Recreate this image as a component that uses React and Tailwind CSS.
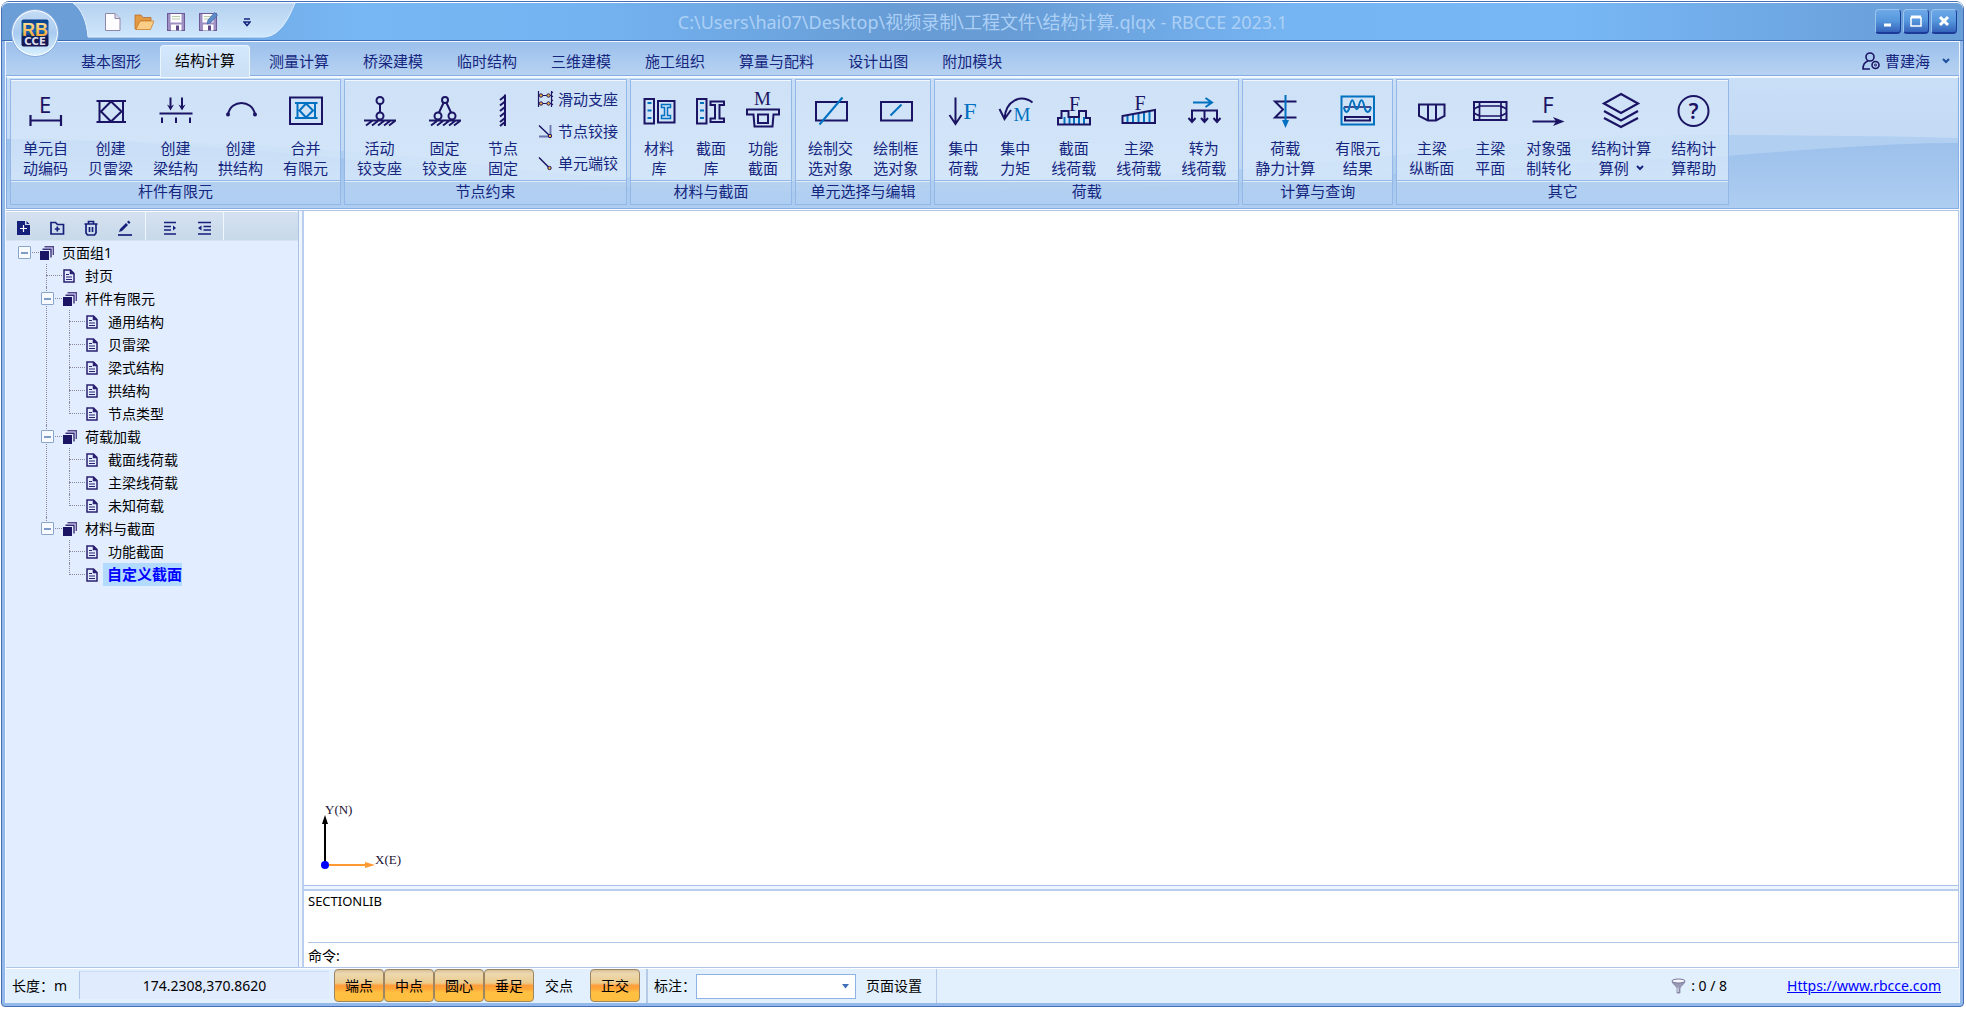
import React, { useState } from 'react';

const DARK = '#1b1464';
const BLUE = '#0070c0';

const Svg = ({ size = 36, children }) => (
  <svg
    width={size}
    height={size}
    viewBox={`0 0 ${size} ${size}`}
    fill="none"
    stroke={DARK}
    strokeWidth="2"
    className="shrink-0 overflow-visible"
    aria-hidden="true"
  >
    {children}
  </svg>
);

const Letter = ({ x, y, size, serif = false, color = DARK, weight = 400, children }) => (
  <text
    x={x}
    y={y}
    fontSize={size}
    fontWeight={weight}
    fontFamily={serif ? 'Liberation Serif, serif' : 'Noto Sans, sans-serif'}
    textAnchor="middle"
    fill={color}
    stroke="none"
  >
    {children}
  </text>
);

const Ground = () => (
  <path d="M2 28.5H34M10 29l-6 4.500M16 29l-6 4.500M22 29l-6 4.500M28 29l-6 4.500M33 29l-6 4.500" />
);

// large ribbon icons, all on a 36x36 grid
const icons = {
  number: (
    <Svg>
      <Letter x={17} y={21} size={22}>E</Letter>
      <path d="M2.500 28.500H33M2.500 23V34M33 23V34" strokeWidth="2.200" />
    </Svg>
  ),
  truss: (
    <Svg>
      <path d="M3.500 9H33M3.500 30H33M6.500 9V30M30 9V30M18 9.500L28.500 19.500L18 29.500L8 19.500Z" />
    </Svg>
  ),
  beam: (
    <Svg>
      <path d="M1.500 21.500H34.500M4 25.500V31M18 25.500V31M32 25.500V31M12.500 5.500V16M24 5.500V16" />
      <path d="M9 12.500L12.500 18.500L16 12.500L12.500 14.500ZM20.500 12.500L24 18.500L27.500 12.500L24 14.500Z" fill={DARK} stroke="none" />
    </Svg>
  ),
  arch: (
    <Svg>
      <path d="M5 22.500C8 7 29 7 32 22.500" />
      <circle cx="5" cy="22.500" r="2" fill={DARK} stroke="none" />
      <circle cx="32" cy="22.500" r="2" fill={DARK} stroke="none" />
    </Svg>
  ),
  merge: (
    <Svg>
      <rect x="2" y="5.500" width="32" height="26.500" />
      <path d="M7 11H29.500M7 26H29.500M9.500 11V26M27 11V26M18 11.500L25 18.500L18 25.500L11.500 18.500Z" stroke={BLUE} />
    </Svg>
  ),
  roller: (
    <Svg>
      <circle cx="18" cy="8.500" r="3.500" />
      <path d="M18 12V20.500" />
      <circle cx="18" cy="24" r="3.500" />
      <Ground />
    </Svg>
  ),
  pinned: (
    <Svg>
      <circle cx="18" cy="8" r="3" />
      <path d="M16.500 11L12 20.500M19.500 11L24 20.500" />
      <circle cx="11" cy="24" r="3.500" />
      <circle cx="25" cy="24" r="3.500" />
      <Ground />
    </Svg>
  ),
  fixed: (
    <Svg>
      <path d="M20 2.500V34" />
      <path d="M20 4L15 8M20 9.500L15 13.500M20 15L15 19M20 20.500L15 24.500M20 26L15 30M20 30L15 34" />
    </Svg>
  ),
  material: (
    <Svg>
      <rect x="3.500" y="7" width="9.500" height="24.500" />
      <path d="M6.500 11H10.500M6.500 18.500H10.500M6.500 26H10.500" stroke={BLUE} />
      <rect x="17" y="9" width="16.500" height="21.500" />
      <path d="M20.500 12.500H29.500V15.500H26.500V23.500H29.500V26.500H20.500V23.500H23.500V15.500H20.500Z" stroke={BLUE} strokeWidth="1.500" />
    </Svg>
  ),
  section: (
    <Svg>
      <rect x="4" y="7" width="9.500" height="24.500" />
      <path d="M7 11H11M7 18.500H11M7 26H11" stroke={BLUE} />
      <path d="M17.500 9.500H31V13H26.500V26.500H31V30H17.500V26.500H22V13H17.500Z" />
    </Svg>
  ),
  func: (
    <Svg>
      <Letter x={17.5} y={13} size={19} serif>M</Letter>
      <path d="M2 17.500H34V22.500H28.500L27.500 34.500H9.500L8.500 22.500H2Z" />
      <rect x="13" y="22.500" width="10" height="8.500" />
    </Svg>
  ),
  crossSel: (
    <Svg>
      <rect x="3" y="10" width="31" height="18.500" />
      <path d="M6.500 32.500L29.500 5.500" stroke={BLUE} />
    </Svg>
  ),
  boxSel: (
    <Svg>
      <rect x="3" y="10" width="31" height="18.500" />
      <path d="M12.500 23.500L23.500 12.500" stroke={BLUE} />
    </Svg>
  ),
  force: (
    <Svg>
      <path d="M10.500 5.500V31.500M4.500 23L10.500 32L16.500 23" />
      <Letter x={25} y={26.5} size={24} serif color={BLUE}>F</Letter>
    </Svg>
  ),
  moment: (
    <Svg>
      <path d="M35.500 10.500C24 2 9 8 7.500 26.500M2.500 17L7.500 27L14 18" />
      <Letter x={25} y={29} size={19} serif color={BLUE}>M</Letter>
    </Svg>
  ),
  sectionLoad: (
    <Svg>
      <path d="M8.500 25V32M13.500 25V32M18 25V32M23 25V32M28 25V32" stroke={BLUE} />
      <path d="M2 26H5.500V19H12.500V25H23V19H30V26H34V32.500H2Z" />
      <Letter x={18.5} y={18.5} size={20} serif>F</Letter>
    </Svg>
  ),
  beamLoad: (
    <Svg>
      <path d="M6.500 24V31M12 23V31M17.500 22V31M23 21V31M28.500 20V31" stroke={BLUE} />
      <path d="M1.500 24L34 18V31H1.500Z" />
      <Letter x={19} y={18} size={20} serif>F</Letter>
    </Svg>
  ),
  convertLoad: (
    <Svg>
      <path d="M7 10.500H25M19.500 6L26 10.500L19.500 15" stroke={BLUE} />
      <path d="M6 29.500V18.500H31V29.500M18.500 18.500V29.500M2.500 26L6 30L9.500 26M15 26L18.500 30L22 26M27.500 26L31 30L34.500 26" />
    </Svg>
  ),
  statics: (
    <Svg>
      <path d="M29.500 9.500H8L16 17.500L8 25.500H29.500" />
      <path d="M18.500 3V29" stroke={BLUE} />
      <path d="M15 28L18.500 36L22 28Z" fill={BLUE} stroke="none" />
    </Svg>
  ),
  result: (
    <Svg>
      <rect x="1.500" y="4.500" width="32.500" height="28" stroke={BLUE} />
      <path d="M4 15H31" strokeWidth="1.500" />
      <path d="M4 15C5 21.500 8 21.500 9.500 15C11.500 6 13 6 15 15C16 18 17.500 18 18.500 15C20.500 6 22.500 6 24.500 15C26 21.500 29.500 21.500 31 15" stroke={BLUE} />
      <rect x="5" y="25" width="25" height="3.500" />
    </Svg>
  ),
  profile: (
    <Svg>
      <path d="M5 12.500H30.500V24L22 28.500H14L5 24ZM14 12.500V28M22 12.500V28" />
    </Svg>
  ),
  plan: (
    <Svg>
      <rect x="2" y="10" width="32.500" height="18" />
      <path d="M7.500 14H29M7.500 24H29M7.500 10V28M29 10V28M2 17L7.500 14M2 21L7.500 24M34.500 17L29 14M34.500 21L29 24" strokeWidth="1.700" />
    </Svg>
  ),
  coerce: (
    <Svg>
      <Letter x={17} y={21} size={22}>F</Letter>
      <path d="M1.500 29.500H28" />
      <path d="M22 25L33.500 29.500L22 34L25 29.500Z" fill={DARK} stroke="none" />
    </Svg>
  ),
  layers: (
    <Svg>
      <path d="M18 2L35 11.500L18 21L1 11.500ZM1 19L18 28.500L35 19M1 26L18 35L35 26" strokeWidth="2.200" />
    </Svg>
  ),
  help: (
    <Svg>
      <circle cx="17.500" cy="19" r="15" />
      <Letter x={17.5} y={26.5} size={21} weight={600}>?</Letter>
    </Svg>
  ),
};

const smallIcons = {
  slide: (
    <Svg size={16}>
      <g strokeWidth="1">
        <path d="M1.500 0V16M14.500 0V16M2 4.500H14M2 12.500H14M14.500 2L16 1M14.500 6L16 5M14.500 10L16 9M14.500 14L16 13" strokeWidth="1.200" />
        <g fill="#f5b640">
          <circle cx="4" cy="4.500" r="1.700" />
          <circle cx="11.500" cy="4.500" r="1.700" />
          <circle cx="4" cy="12.500" r="1.700" />
          <circle cx="11.500" cy="12.500" r="1.700" />
        </g>
      </g>
    </Svg>
  ),
  joint: (
    <Svg size={16}>
      <path d="M2 13.500H12M13.500 2V12" stroke="#6a72b0" strokeWidth="1.800" />
      <path d="M2 2.500L12.500 12.500" strokeWidth="1.500" />
      <circle cx="13" cy="13" r="1.700" fill="#f5b640" strokeWidth="1" />
    </Svg>
  ),
  endHinge: (
    <Svg size={16}>
      <path d="M2 2.500L11.500 12" strokeWidth="1.500" />
      <circle cx="12.500" cy="13" r="1.700" fill="#f5b640" strokeWidth="1" />
    </Svg>
  ),
};

const tabs = [
  '基本图形', '结构计算', '测量计算', '桥梁建模', '临时结构',
  '三维建模', '施工组织', '算量与配料', '设计出图', '附加模块',
];

const ribbonGroups = [
  {
    title: '杆件有限元',
    items: [
      ['number', '单元自', '动编码'],
      ['truss', '创建', '贝雷梁'],
      ['beam', '创建', '梁结构'],
      ['arch', '创建', '拱结构'],
      ['merge', '合并', '有限元'],
    ],
  },
  {
    title: '节点约束',
    items: [
      ['roller', '活动', '铰支座'],
      ['pinned', '固定', '铰支座'],
      ['fixed', '节点', '固定'],
    ],
    small: [
      ['slide', '滑动支座'],
      ['joint', '节点铰接'],
      ['endHinge', '单元端铰'],
    ],
  },
  {
    title: '材料与截面',
    items: [
      ['material', '材料', '库'],
      ['section', '截面', '库'],
      ['func', '功能', '截面'],
    ],
  },
  {
    title: '单元选择与编辑',
    items: [
      ['crossSel', '绘制交', '选对象'],
      ['boxSel', '绘制框', '选对象'],
    ],
  },
  {
    title: '荷载',
    items: [
      ['force', '集中', '荷载'],
      ['moment', '集中', '力矩'],
      ['sectionLoad', '截面', '线荷载'],
      ['beamLoad', '主梁', '线荷载'],
      ['convertLoad', '转为', '线荷载'],
    ],
  },
  {
    title: '计算与查询',
    items: [
      ['statics', '荷载', '静力计算'],
      ['result', '有限元', '结果'],
    ],
  },
  {
    title: '其它',
    items: [
      ['profile', '主梁', '纵断面'],
      ['plan', '主梁', '平面'],
      ['coerce', '对象强', '制转化'],
      ['layers', '结构计算', '算例', true],
      ['help', '结构计', '算帮助'],
    ],
  },
];

const tree = {
  name: '页面组1',
  children: [
    { name: '封页' },
    {
      name: '杆件有限元',
      children: [
        { name: '通用结构' },
        { name: '贝雷梁' },
        { name: '梁式结构' },
        { name: '拱结构' },
        { name: '节点类型' },
      ],
    },
    {
      name: '荷载加载',
      children: [{ name: '截面线荷载' }, { name: '主梁线荷载' }, { name: '未知荷载' }],
    },
    {
      name: '材料与截面',
      children: [{ name: '功能截面' }, { name: '自定义截面' }],
    },
  ],
};

const Chevron = ({ color = '#15267f' }) => (
  <svg width="8" height="6" viewBox="0 0 8 6" fill="none" stroke={color} strokeWidth="2" aria-hidden="true">
    <path d="M1 1L4 4L7 1" />
  </svg>
);

const Logo = () => (
  <button
    type="button"
    aria-label="RBCCE"
    className="absolute left-[9px] top-[7px] z-10 flex h-12 w-12 items-center justify-center rounded-full border border-[#86addf] bg-gradient-to-b from-[#c5dcf5] via-[#a9cbf0] to-[#d9f1ff] ring-1 ring-inset ring-white"
  >
    <svg width="28" height="28" viewBox="0 0 28 28" aria-hidden="true">
      <defs>
        <linearGradient id="logoBack" x1="0" y1="0" x2="0" y2="1">
          <stop offset="0" stopColor="#0a3f87" />
          <stop offset="0.45" stopColor="#1766b4" />
          <stop offset="0.65" stopColor="#0c1c58" />
          <stop offset="1" stopColor="#1a1550" />
        </linearGradient>
        <linearGradient id="logoGold" x1="0" y1="0" x2="0" y2="1">
          <stop offset="0" stopColor="#ffe9a8" />
          <stop offset="1" stopColor="#f39a1c" />
        </linearGradient>
      </defs>
      <rect x="0.500" y="0.500" width="27" height="27" rx="2" fill="url(#logoBack)" />
      <text x="14" y="17" textAnchor="middle" fontSize="18" fontWeight="700" fontFamily="Liberation Sans, sans-serif" fill="url(#logoGold)">RB</text>
      <text x="14" y="26" textAnchor="middle" fontSize="10" fontWeight="700" fontFamily="DejaVu Sans, sans-serif" fill="#dcdcec">CCE</text>
    </svg>
  </button>
);

const Floppy = ({ pen = false }) => (
  <svg width="20" height="20" viewBox="0 0 20 20" aria-hidden="true">
    <rect x="1.500" y="1.500" width="17" height="17" fill="#a08fc2" stroke="#6b5a96" />
    <rect x="4.500" y="2" width="11" height="8.500" fill="#fdfdff" />
    <path d="M6 4.500H14M6 7H14" stroke="#b9c9a8" />
    <rect x="5" y="12.500" width="10.500" height="6" fill="#fff" />
    <rect x="10" y="13.500" width="3" height="5" fill="#5b4a86" />
    {pen && <path d="M9 12L10 8L16.500 0.500L19.500 3L13 10.500Z" fill="#5d8cc8" stroke="#3f6aa8" strokeWidth="0.700" />}
  </svg>
);

const QuickAccess = () => (
  <div className="relative ml-[70px] flex h-9 w-[226px] items-center pl-[30px] pt-1">
    <svg className="absolute inset-0 h-full w-full" viewBox="0 0 226 36" preserveAspectRatio="none" aria-hidden="true">
      <defs>
        <linearGradient id="quickBar" x1="0" y1="0" x2="0" y2="1">
          <stop offset="0" stopColor="#b5d1ef" />
          <stop offset="1" stopColor="#cfe7fc" />
        </linearGradient>
      </defs>
      <path d="M1 1C10 7 15 21 16 35H192C209 34 217 15 223 1Z" fill="url(#quickBar)" stroke="#e4f1ff" strokeWidth="1" />
    </svg>
    <div className="relative flex items-center gap-3">
      <button type="button" aria-label="新建">
        <svg width="20" height="20" viewBox="0 0 20 20" aria-hidden="true">
          <path d="M3.500 1.500H13L18 6.500V18.500H3.500Z" fill="#fdfdff" stroke="#8f86a8" />
          <path d="M13 1.500V6.500H18" fill="#dad6ea" stroke="#8f86a8" />
        </svg>
      </button>
      <button type="button" aria-label="打开">
        <svg width="20" height="20" viewBox="0 0 20 20" aria-hidden="true">
          <path d="M1 3H7L9 5.500H17V9H6L3 17H1Z" fill="#e39a45" stroke="#b9651b" strokeWidth="0.700" />
          <path d="M6 9H20L16.500 17.500H2Z" fill="#fbce88" stroke="#cf7d26" strokeWidth="0.800" />
        </svg>
      </button>
      <button type="button" aria-label="保存"><Floppy /></button>
      <button type="button" aria-label="另存为"><Floppy pen /></button>
      <button type="button" aria-label="自定义快速访问工具栏" className="ml-[13px]">
        <svg width="8" height="9" viewBox="0 0 8 9" fill="none" stroke="#15267f" strokeWidth="1.500" aria-hidden="true">
          <path d="M1 1H7M1 4H7L4 7.500Z" />
        </svg>
      </button>
    </div>
  </div>
);

const WindowButton = ({ label, children }) => (
  <button
    type="button"
    aria-label={label}
    className="flex h-[25px] w-[26px] items-center justify-center rounded-sm border border-b-2 border-[#9cc3ee] border-r-[#1c3f9c] border-b-[#1c3a98] bg-gradient-to-b from-[#6da9e8] via-[#5596dc] to-[#3763bb]"
  >
    <svg width="14" height="14" viewBox="0 0 14 14" fill="none" stroke="#fff" aria-hidden="true">{children}</svg>
  </button>
);

const TitleBar = () => (
  <header className="relative flex h-[39px] shrink-0 items-start rounded-t-md border-b border-[#3f6db5] bg-[linear-gradient(90deg,#6b9dd6_0%,#6b9dd6_5%,#77b7f4_18%,#74b3f1_30%,#679cd5_46%,#679cd5_51%,#76b5f3_66%,#77b7f5_80%,#699ed8_98%)] shadow-[inset_0_1px_0_#ffffff]">
    <Logo />
    <QuickAccess />
    <h1 className="pointer-events-none absolute inset-x-0 top-0 text-center text-lg/10 text-[#acd0f5]">
      C:\Users\hai07\Desktop\视频录制\工程文件\结构计算.qlqx - RBCCE 2023.1
    </h1>
    <div className="relative ml-auto flex gap-0.5 pr-1.5 pt-[7px]">
      <WindowButton label="最小化"><path d="M3 11H10" strokeWidth="3" /></WindowButton>
      <WindowButton label="最大化">
        <path d="M2 3H12" strokeWidth="3" />
        <path d="M2 3V12H12V3" strokeWidth="1.500" />
      </WindowButton>
      <WindowButton label="关闭"><path d="M3 3L11 11M11 3L3 11" strokeWidth="3" /></WindowButton>
    </div>
  </header>
);

const TabStrip = () => (
  <nav className="flex h-[35px] items-end border-b border-t border-b-[#86aee5] border-t-[#f1f7ff] bg-gradient-to-b from-[#9bc0ec] to-[#b7d2f1] pl-[60px]">
    <div className="flex items-end gap-1" role="tablist">
      {tabs.map((tab, i) => (
        <button
          key={tab}
          type="button"
          role="tab"
          aria-selected={i === 1}
          className={
            i === 1
              ? 'relative z-10 -mb-[2px] h-8 rounded-t-sm border border-b-0 border-[#e9f4ff] bg-gradient-to-b from-[#d3e8fc] to-[#cbdff5] px-[14px] pb-0.5 text-[15px] text-black'
              : 'h-7 px-[15px] text-[15px] text-[#15267f]'
          }
        >
          {tab}
        </button>
      ))}
    </div>
    <button type="button" className="mb-[3px] ml-auto flex items-center pr-[9px] text-[15px] text-[#15267f]">
      <svg width="18" height="18" viewBox="0 0 18 18" fill="none" stroke={DARK} strokeWidth="1.600" className="mr-[5px]" aria-hidden="true">
        <circle cx="8" cy="5" r="4" />
        <path d="M6 9C2.500 10 1 13 1 17H8" />
        <circle cx="13.500" cy="13" r="3.500" />
        <circle cx="13.500" cy="13" r="1" strokeWidth="1" />
      </svg>
      曹建海
      <span className="ml-3"><Chevron color="#1d4e9c" /></span>
    </button>
  </nav>
);

const RibbonButton = ({ item }) => {
  const [icon, line1, line2, dropdown] = item;
  return (
    <button type="button" className="flex h-[100px] flex-col items-center px-[10px] pt-3 text-[15px]/5 text-[#15267f]">
      <span className="-mx-0.5 flex">{icons[icon]}</span>
      <span className="mt-[10px] block whitespace-nowrap">{line1}</span>
      <span className="flex items-center gap-[7px] whitespace-nowrap">
        {line2}
        {dropdown && <Chevron />}
      </span>
    </button>
  );
};

const Ribbon = () => (
  <section className="relative border border-t-2 border-[#86aee5] border-t-[#f4f9ff] px-[3px] pb-[3px] pt-px">
    <svg className="absolute inset-0 h-full w-full" viewBox="0 0 1952 130" preserveAspectRatio="none" aria-hidden="true">
      <defs>
        <linearGradient id="ribbonTop" x1="0" y1="0" x2="0" y2="1">
          <stop offset="0" stopColor="#c9def7" />
          <stop offset="1" stopColor="#bed6f1" />
        </linearGradient>
        <linearGradient id="ribbonLow" x1="0" y1="0" x2="0" y2="1">
          <stop offset="0" stopColor="#9bc0eb" />
          <stop offset="1" stopColor="#aecdf1" />
        </linearGradient>
      </defs>
      <rect width="1952" height="130" fill="url(#ribbonTop)" />
      <path d="M0 61C200 63 360 70 500 90C650 108 900 104 1120 98C1350 88 1500 58 1700 57C1800 57 1880 58 1952 60V130H0Z" fill="#b1cff1" />
      <path d="M0 61C200 63 360 82 500 100C650 118 900 114 1120 110C1350 100 1600 82 1722 78C1820 70 1890 65 1952 65V130H0Z" fill="url(#ribbonLow)" />
    </svg>
    <div className="relative flex gap-[3px]">
      {ribbonGroups.map((group) => (
        <div key={group.title} className="flex flex-col border border-[#93b8e8]">
          <div className="flex border-t border-[#f2f8ff] bg-gradient-to-b from-[#cfe2f6]/80 to-[#d8e9fb]/80 px-[2px]">
            <div className="-mt-px flex">
              {group.items.map((item) => (
                <RibbonButton key={item[0]} item={item} />
              ))}
            </div>
            {group.small && (
              <div className="-mt-px flex w-[95px] flex-col pt-[3px]">
                {group.small.map(([icon, label]) => (
                  <button key={icon} type="button" className="flex h-8 items-center gap-[5px] pl-2 text-[15px] whitespace-nowrap text-[#15267f]">
                    {smallIcons[icon]}
                    {label}
                  </button>
                ))}
              </div>
            )}
          </div>
          <h2 className="h-6 border-t border-[#93b8e8] bg-gradient-to-b from-[#b8d2ef]/70 to-[#b0d0f4]/70 text-center text-[15px]/[21px] text-[#15267f] shadow-[inset_0_1px_0_#deecfc]">
            {group.title}
          </h2>
        </div>
      ))}
    </div>
  </section>
);

const FolderIcon = () => (
  <svg width="14" height="14" viewBox="0 0 14 14" aria-hidden="true">
    <path d="M4.500 0.700H13.300V9" fill="none" stroke="#55458c" strokeWidth="1.400" />
    <path d="M2.500 3.200H11V11.500" fill="none" stroke="#3a2b78" strokeWidth="1.400" />
    <rect x="0" y="5" width="9" height="9" fill={DARK} />
  </svg>
);

const PageIcon = () => (
  <svg width="12" height="14" viewBox="0 0 12 14" fill="none" stroke="#2a1f70" strokeWidth="1.500" aria-hidden="true">
    <path d="M1 1H7.500L11 4.500V13H1Z" />
    <path d="M7.500 1V4.500H11" fill="#2a1f70" />
    <path d="M3 5.500H6M3 8H9M3 10.500H9" strokeWidth="1.200" />
  </svg>
);

const TreeNode = ({ node, last = true, root = false }) => {
  const [open, setOpen] = useState(true);
  const selected = node.name === '自定义截面';
  return (
    <li className="relative">
      {!root && (
        <span
          className={`absolute left-[5px] top-0 border-l border-dotted border-[#8b86a0] ${last ? 'h-3' : 'h-full'}`}
        />
      )}
      <div className="relative flex h-[23px] items-center">
        <span className="absolute left-[5px] top-[11px] w-4 border-t border-dotted border-[#8b86a0]" />
        <span className="relative flex w-[22px] items-center">
          {node.children && (
            <button
              type="button"
              aria-label={open ? '折叠' : '展开'}
              onClick={() => setOpen(!open)}
              className="flex h-[13px] w-[13px] items-center justify-center rounded-[1px] border border-[#8ba4cb] bg-[#f7fbff]"
            >
              <span className="h-0.5 w-[7px] bg-[#7f9cc9]" />
            </button>
          )}
        </span>
        <span className="relative flex w-[17px] items-center">{node.children ? <FolderIcon /> : <PageIcon />}</span>
        <span
          className={
            selected
              ? 'h-[23px] bg-[#b3dbff] pl-1 text-[15px]/[23px] font-bold text-[#0000ff]'
              : 'pl-[5px] text-sm/[23px] text-black'
          }
        >
          {node.name}
        </span>
      </div>
      {node.children && open && (
        <ul className="ml-[23px]">
          {node.children.map((child, i) => (
            <TreeNode key={child.name} node={child} last={i === node.children.length - 1} />
          ))}
        </ul>
      )}
    </li>
  );
};

const ToolButton = ({ label, children }) => (
  <button type="button" aria-label={label} className="flex w-[34px] items-center justify-center pt-[3px]">
    <svg width="16" height="16" viewBox="0 0 16 16" fill="none" stroke="#15207a" strokeWidth="1.700" aria-hidden="true">
      {children}
    </svg>
  </button>
);

const Sidebar = () => (
  <aside className="flex w-[293px] shrink-0 flex-col border-r border-[#a9c3e8] bg-[#e2eeff]">
    <div className="flex h-[30px] shrink-0 border-b border-t border-b-[#d6e3f3] border-t-white bg-gradient-to-b from-[#d5e1f0] to-[#c8d9ea]">
      <div className="flex border-r border-[#f1f7ff] pr-[3px]">
        <ToolButton label="新建页面">
          <path d="M2 1H10V5H15V15H2Z" fill="#15207a" stroke="none" />
          <path d="M11.500 1L14.500 4H11.500Z" fill="#15207a" stroke="none" />
          <path d="M8.500 5V12M5 8.500H12" stroke="#fff" strokeWidth="1.200" />
        </ToolButton>
        <ToolButton label="新建页面组">
          <path d="M2 2.500H6.500L8.500 4.500H14.500V14H2ZM8.300 6.500V11.500M5.800 9H10.800" />
        </ToolButton>
        <ToolButton label="删除">
          <path d="M1.500 4H14.500M5.500 4V1.500H10.500V4M3 4V13L4.500 15H11.500L13 13V4M6.500 7V12M9.500 7V12" />
        </ToolButton>
        <ToolButton label="编辑">
          <path d="M1 15H15" />
          <path d="M2 12L3 9L9 3L11 5L5 11ZM10 2L11.500 0.500L13.500 2.500L12 4Z" fill="#15207a" stroke="none" />
        </ToolButton>
      </div>
      <div className="flex border-r border-[#f1f7ff] pl-[7px] pr-0.5">
        <ToolButton label="展开全部">
          <path d="M2 2.500H14M2 6.500H9M2 10H9M2 14H14" />
          <path d="M11 5.500L14 8L11 10.500Z" fill="#15207a" stroke="none" />
        </ToolButton>
        <ToolButton label="折叠全部">
          <path d="M2 2.500H15M7.500 6.500H15M7.500 10H15M2 14H15" strokeWidth="1.300" />
          <path d="M5.500 5.500L2 8L5.500 10.500Z" fill="#15207a" stroke="none" />
        </ToolButton>
      </div>
    </div>
    <ul className="pl-3">
      <TreeNode node={tree} root />
    </ul>
  </aside>
);

const DrawingCanvas = () => (
  <div className="flex min-h-0 flex-1 flex-col justify-end bg-white pb-2 pl-[11px]">
    <svg width="120" height="74" viewBox="0 0 120 74" className="overflow-visible" aria-label="坐标轴">
      <path d="M10 62V18" stroke="#000" strokeWidth="2" />
      <path d="M10 12L13 21H7Z" fill="#000" />
      <path d="M14 62H52" stroke="#ff9a33" strokeWidth="2" />
      <path d="M60 62L50 59V65Z" fill="#ff9a33" />
      <circle cx="10" cy="62" r="4" fill="#0000ff" />
      <text x="10" y="11" fontSize="13" fontFamily="Liberation Serif, serif" fill="#1b1030">Y(N)</text>
      <text x="60" y="61" fontSize="13" fontFamily="Liberation Serif, serif" fill="#1b1030">X(E)</text>
    </svg>
  </div>
);

const CommandPanel = () => (
  <div className="shrink-0 bg-white">
    <div className="h-[6px] border-b-2 border-t border-b-[#b9cdee] border-t-[#a9c3e8] bg-[#eef5ff]" />
    <p className="h-[51px] pl-1 text-[13px]/5 text-black">SECTIONLIB</p>
    <div className="ml-1 flex h-[25px] items-center border-t border-[#b0c4e6] pt-0.5 text-sm text-black">
      <label htmlFor="command">命令:</label>
      <input id="command" type="text" className="ml-1 min-w-0 flex-1 outline-none" />
    </div>
  </div>
);

const SnapButton = ({ active = false, children }) => (
  <button
    type="button"
    aria-pressed={active}
    className={
      active
        ? 'h-[33px] w-[50px] rounded-sm border border-[#9c8560] bg-[linear-gradient(180deg,#d9c09c_0%,#ecd9b0_12%,#eccb8c_42%,#ff9d3c_50%,#ffa838_62%,#ffc043_72%,#ffbe3e_100%)] text-sm text-black'
        : 'h-[33px] w-[50px] text-sm text-black'
    }
  >
    {children}
  </button>
);

const StatusBar = () => (
  <footer className="flex h-[35px] shrink-0 items-stretch border-t border-white bg-[#e2f0fe] text-sm text-black">
    <div className="flex w-[73px] items-center pl-[6px]">长度：m</div>
    <div className="mb-1 mt-0.5 flex w-[250px] items-center justify-center border-l border-t border-[#afc6e8] border-t-[#cbdcf4] bg-[#e0ebfd]">
      174.2308,370.8620
    </div>
    <div className="ml-[5px] flex">
      <SnapButton active>端点</SnapButton>
      <SnapButton active>中点</SnapButton>
      <SnapButton active>圆心</SnapButton>
      <SnapButton active>垂足</SnapButton>
      <SnapButton>交点</SnapButton>
    </div>
    <div className="ml-[6px] flex border-r-2 border-[#b6c9e6] pr-[6px]">
      <SnapButton active>正交</SnapButton>
    </div>
    <div className="flex items-center border-r border-[#b6c9e6] pl-[6px] pr-[14px]">
      <label htmlFor="dimension">标注：</label>
      <span className="relative mr-[10px] flex">
        <select id="dimension" className="h-[25px] w-40 appearance-none border border-[#8db2e3] bg-white">
          <option value=""></option>
        </select>
        <svg className="pointer-events-none absolute right-[7px] top-[10px]" width="7" height="5" viewBox="0 0 7 5" aria-hidden="true">
          <path d="M0 0H7L3.500 4.500Z" fill="#3f6fb8" />
        </svg>
      </span>
      <button type="button">页面设置</button>
    </div>
    <div className="ml-auto flex items-center gap-[5px] pr-[60px]">
      <svg width="15" height="16" viewBox="0 0 15 16" aria-hidden="true">
        <path d="M1 3C1 6 5.500 8 6 10V15H9V10C9.500 8 14 6 14 3Z" fill="#9a9ab4" stroke="#77779a" strokeWidth="0.700" />
        <ellipse cx="7.500" cy="3" rx="6.500" ry="2" fill="#f4f4fa" stroke="#77779a" />
        <path d="M7 9.500V14" stroke="#e8e8f2" />
      </svg>
      : 0 / 8
    </div>
    <div className="flex items-center pr-[18px]">
      <a href="https://www.rbcce.com" className="text-[#0000ff] underline">Https://www.rbcce.com</a>
    </div>
  </footer>
);

const App = () => {
  return (
    <div className="h-screen bg-white pb-0.5 pl-px pr-0.5 pt-px font-['Noto_Sans','Noto_Sans_CJK_SC',sans-serif]">
      <div className="flex h-full flex-col rounded-t-lg rounded-b border border-[#466fb5] bg-[#93b9ea]">
        <TitleBar />
        <div className="flex min-h-0 flex-1 flex-col px-[3px] pb-[3px]">
          <div className="flex min-h-0 flex-1 flex-col border-x border-[#eef5ff] bg-white">
            <div className="shrink-0">
              <TabStrip />
              <Ribbon />
            </div>
            <main className="mt-px flex min-h-0 flex-1 border-t border-b border-[#b0c6e8]">
              <Sidebar />
              <div className="w-[5px] shrink-0 border-x-2 border-l-[#eef5ff] border-r-[#b9cdee] bg-[#eef5ff]" />
              <div className="flex min-w-0 flex-1 flex-col border-r border-[#b0c6e8]">
                <DrawingCanvas />
                <CommandPanel />
              </div>
            </main>
            <StatusBar />
          </div>
        </div>
      </div>
    </div>
  );
};

export default App;
